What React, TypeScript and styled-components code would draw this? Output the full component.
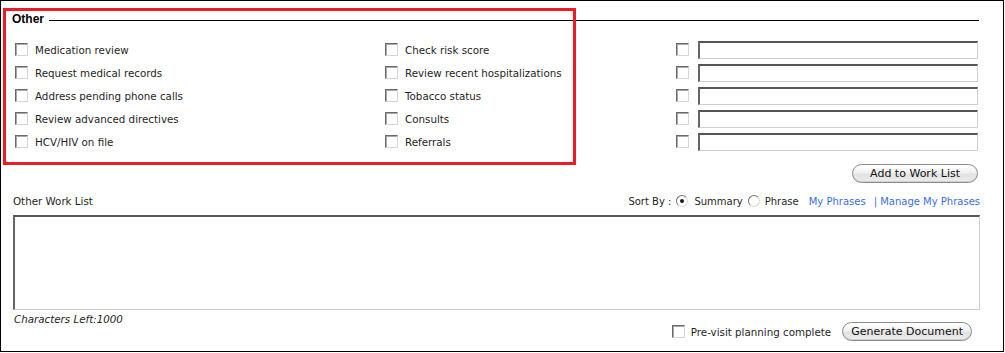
import React from "react";
import styled, { createGlobalStyle } from "styled-components";

const Global = createGlobalStyle`
  html, body { margin: 0; padding: 0; background: #fff; }
  body { font-family: "DejaVu Sans", Verdana, sans-serif; }
`;

const Panel = styled.div`
  position: relative;
  box-sizing: border-box;
  width: 1004px;
  height: 352px;
  border: 1px solid #000;
  padding: 10px 24px 0 11px;
  font-family: "DejaVu Sans", Verdana, sans-serif;
  font-size: 10.3px;
  color: #1e1e1e;
  display: flex;
  flex-direction: column;
`;

const Highlight = styled.div`
  position: absolute;
  left: 2px;
  top: 7px;
  width: 573px;
  height: 157px;
  box-sizing: border-box;
  border: 3px solid #ed1c24;
  pointer-events: none;
`;

const Legend = styled.div`
  display: flex;
  align-items: center;
  height: 16px;
`;

const LegendTitle = styled.span`
  font-family: "Liberation Sans", Arial, sans-serif;
  font-weight: bold;
  font-size: 12px;
  color: #000;
`;

const LegendRule = styled.div`
  flex: 1;
  height: 1px;
  background: #000;
  margin: 2px 0 0 5px;
`;

const OptionsGrid = styled.div`
  display: grid;
  grid-template-columns: 370px 291px 1fr;
  margin: 11px 0 0 3px;
`;

const Column = styled.div`
  display: flex;
  flex-direction: column;
`;

const OptionRow = styled.label`
  display: flex;
  align-items: center;
  height: 23px;
  gap: 7px;
  white-space: nowrap;
`;

const Box = styled.span`
  display: inline-block;
  box-sizing: border-box;
  width: 13px;
  height: 13px;
  flex: none;
  background: #fff;
  border-style: solid;
  border-width: 1px;
  border-color: #6a6a6a #d6d6d6 #d6d6d6 #6a6a6a;
  box-shadow: inset 1px 1px 0 #a8a8a8;
`;

const FreeRow = styled.div`
  display: flex;
  align-items: center;
  height: 23px;
  gap: 9px;
`;

const TextInput = styled.div`
  flex: 1;
  box-sizing: border-box;
  height: 18px;
  margin-right: 1px;
  background: #fff;
  border-style: solid;
  border-width: 2px 1px 1px 2px;
  border-color: #555 #d0d0d0 #d0d0d0 #666;
`;

const ActionRow = styled.div<{ $inset?: number }>`
  display: flex;
  justify-content: flex-end;
  margin-top: 11px;
  padding-right: ${(p) => p.$inset ?? 0}px;
`;

const PillButton = styled.button<{ $pad?: number }>`
  box-sizing: border-box;
  height: 19px;
  padding: 0 ${(p) => p.$pad ?? 17}px;
  border: 1px solid #8c8c8c;
  border-radius: 10px;
  background: linear-gradient(#ffffff, #f1f1f1 45%, #e2e2e2 55%, #ececec);
  box-shadow: inset 0 -1px 0 #cfcfcf;
  font-family: "DejaVu Sans", Verdana, sans-serif;
  font-size: 11px;
  color: #111;
  line-height: 17px;
  cursor: pointer;
`;

const Toolbar = styled.div`
  display: flex;
  justify-content: space-between;
  align-items: center;
  height: 16px;
  margin-top: 10px;
  padding-left: 1px;
`;

const SortGroup = styled.div`
  display: flex;
  align-items: center;
  margin-right: -1px;
  font-size: 10px;
  white-space: nowrap;
`;

const Radio = styled.span<{ $on?: boolean }>`
  position: relative;
  display: inline-block;
  box-sizing: border-box;
  width: 12px;
  height: 12px;
  border-radius: 50%;
  border: 1px solid;
  border-color: #707070 #d8d8d8 #d8d8d8 #707070;
  background: #fff;
  margin: 0 ${(p) => (p.$on ? 6 : 5)}px 0 5px;
  &::after {
    content: "";
    display: ${(p) => (p.$on ? "block" : "none")};
    position: absolute;
    left: 3px;
    top: 3px;
    width: 4px;
    height: 4px;
    border-radius: 50%;
    background: #1a1a1a;
  }
`;

const Spacer = styled.span<{ $w: number }>`
  display: inline-block;
  width: ${(p) => p.$w}px;
`;

const Link = styled.a`
  color: #3a6ee0;
  text-decoration: none;
`;

const WorkArea = styled.div`
  box-sizing: border-box;
  height: 95px;
  margin: 6px -1px 0 1px;
  background: #fff;
  border-style: solid;
  border-width: 2px 1px 1px 2px;
  border-color: #555 #cfcfcf #cfcfcf #666;
`;

const Footer = styled.div`
  display: flex;
  justify-content: space-between;
  align-items: flex-start;
  margin-top: 3px;
`;

const Counter = styled.span`
  font-style: italic;
  padding-left: 2px;
`;

const CompleteGroup = styled.div`
  display: flex;
  align-items: center;
  gap: 11px;
  padding-top: 9px;
  margin-right: 7px;
`;

const CheckLabel = styled.label`
  display: flex;
  align-items: center;
  gap: 6px;
  font-size: 10.3px;
`;

const left = [
  "Medication review",
  "Request medical records",
  "Address pending phone calls",
  "Review advanced directives",
  "HCV/HIV on file",
];
const middle = [
  "Check risk score",
  "Review recent hospitalizations",
  "Tobacco status",
  "Consults",
  "Referrals",
];

export default function App() {
  return (
    <>
      <Global />
      <Panel>
        <Legend>
          <LegendTitle>Other</LegendTitle>
          <LegendRule />
        </Legend>
        <OptionsGrid>
          <Column>
            {left.map((t) => (
              <OptionRow key={t}>
                <Box />
                {t}
              </OptionRow>
            ))}
          </Column>
          <Column>
            {middle.map((t) => (
              <OptionRow key={t}>
                <Box />
                {t}
              </OptionRow>
            ))}
          </Column>
          <Column>
            {[0, 1, 2, 3, 4].map((i) => (
              <FreeRow key={i}>
                <Box />
                <TextInput />
              </FreeRow>
            ))}
          </Column>
        </OptionsGrid>
        <ActionRow $inset={1}>
          <PillButton $pad={17}>Add to Work List</PillButton>
        </ActionRow>
        <Toolbar>
          <span>Other Work List</span>
          <SortGroup>
            <span>Sort By :</span>
            <Radio $on />
            <span>Summary</span>
            <Radio />
            <span>Phrase</span>
            <Spacer $w={10} />
            <Link>My Phrases</Link>
            <Spacer $w={8} />
            <Link>| Manage My Phrases</Link>
          </SortGroup>
        </Toolbar>
        <WorkArea />
        <Footer>
          <Counter>Characters Left:1000</Counter>
          <CompleteGroup>
            <CheckLabel>
              <Box />
              Pre-visit planning complete
            </CheckLabel>
            <PillButton $pad={8}>Generate Document</PillButton>
          </CompleteGroup>
        </Footer>
        <Highlight />
      </Panel>
    </>
  );
}
